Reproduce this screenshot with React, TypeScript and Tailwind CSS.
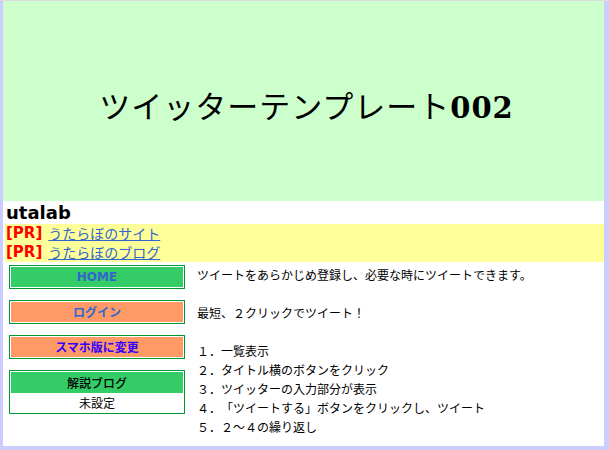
import React from 'react'

const jp = { fontFamily: '"Noto Sans CJK JP", "Liberation Sans", sans-serif' }
const latin = { fontFamily: '"DejaVu Sans", "Noto Sans CJK JP", sans-serif' }

const steps = [
  '１．一覧表示',
  '２．タイトル横のボタンをクリック',
  '３．ツイッターの入力部分が表示',
  '４．「ツイートする」ボタンをクリックし、ツイート',
  '５．２～４の繰り返し',
]

const NavButton: React.FC<{ label: string; fill: string; color: string; latinFont?: boolean }> = ({
  label,
  fill,
  color,
  latinFont,
}) => (
  <div className="border border-[#009933] bg-white p-[1px]">
    <div
      className={`h-[20px] flex items-center justify-center text-[12px] font-bold ${fill} ${color}`}
      style={latinFont ? latin : undefined}
    >
      {label}
    </div>
  </div>
)

const PrLink: React.FC<{ label: string }> = ({ label }) => (
  <div className="h-[19px] flex items-center gap-[6px] overflow-hidden">
    <span className="text-[#ff0000] font-bold text-[15px] leading-[19px]" style={latin}>
      [PR]
    </span>
    <a className="text-[#3366cc] underline text-[14px] leading-[19px]">{label}</a>
  </div>
)

export default function App() {
  return (
    <div
      className="min-h-[450px] bg-[#ccccff] border-t border-[#dcdcdc] pl-[3px] pr-[5px] pb-[5px] [text-spacing-trim:space-all]"
      style={jp}
    >
      <div className="bg-white">
        {/* Header */}
        <div className="h-[200px] bg-[#ccffcc] flex items-center justify-center pt-[14px] pl-[6px]">
          <h1
            className="text-[31px] font-normal text-black tracking-[1px]"
            style={{ fontFamily: '"Liberation Serif", "Noto Sans CJK JP", serif' }}
          >
            ツイッターテンプレート
            <span className="font-bold text-[29px]" style={{ fontFamily: '"DejaVu Serif", serif' }}>
              002
            </span>
          </h1>
        </div>

        <h2 className="h-[23px] px-[3px] text-[18px] font-bold leading-[23px] text-black" style={latin}>
          utalab
        </h2>

        {/* PR links */}
        <div className="ml-[2px] bg-[#ffff99] px-[1px]">
          <PrLink label="うたらぼのサイト" />
          <PrLink label="うたらぼのブログ" />
        </div>

        {/* Body */}
        <div className="flex gap-[12px] pl-[6px] pt-[3px] pb-[10px]">
          <div className="w-[176px] flex flex-col gap-[11px] shrink-0">
            <NavButton label="HOME" fill="bg-[#33cc66]" color="text-[#3366cc]" latinFont />
            <NavButton label="ログイン" fill="bg-[#ff9966]" color="text-[#3366cc]" />
            <NavButton label="スマホ版に変更" fill="bg-[#ff9966]" color="text-[#3300ff]" />
            <div className="border border-[#009933] bg-white p-[1px]">
              <div className="h-[21px] bg-[#33cc66] flex items-center justify-center text-[12px] font-medium text-black">
                解説ブログ
              </div>
              <div className="h-[19px] flex items-center justify-center text-[12px] text-black">未設定</div>
            </div>
          </div>

          <div className="text-[12px] leading-[19px] text-black">
            <p className="mb-[19px]">ツイートをあらかじめ登録し、必要な時にツイートできます。</p>
            <p className="mb-[19px]">最短、２クリックでツイート！</p>
            <ul>
              {steps.map((s) => (
                <li key={s}>{s}</li>
              ))}
            </ul>
          </div>
        </div>
      </div>
    </div>
  )
}
